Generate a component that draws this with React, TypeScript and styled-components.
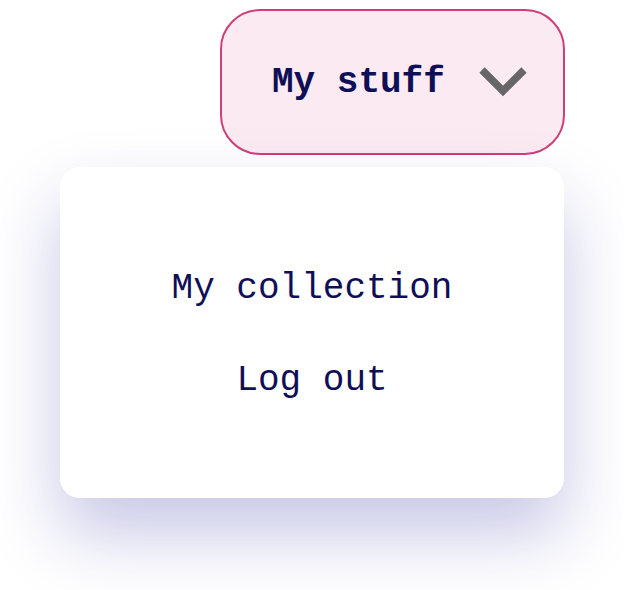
import styled, { createGlobalStyle } from "styled-components";

const MONO = `"Liberation Mono", "Courier New", monospace`;

const GlobalStyle = createGlobalStyle`
  html, body {
    margin: 0;
    padding: 0;
    background: #ffffff;
  }
  body {
    font-family: ${MONO};
  }
`;

const Chevron = () => (
  <svg width="48" height="32" viewBox="0 0 48 32" fill="none">
    <path d="M3 4 L24 25 L45 4" stroke="#666666" strokeWidth="7.5" strokeLinecap="butt" strokeLinejoin="miter" />
  </svg>
);

const App = () => {
  return (
    <>
      <GlobalStyle />
      <StyledWrapper>
        <StyledTrigger type="button">
          <StyledTriggerLabel>My stuff</StyledTriggerLabel>
          <Chevron />
        </StyledTrigger>
        <StyledMenu>
          <StyledMenuItem href="#">My collection</StyledMenuItem>
          <StyledMenuItem href="#">Log out</StyledMenuItem>
        </StyledMenu>
      </StyledWrapper>
    </>
  );
};

export default App;

const StyledWrapper = styled.div`
  width: 565px;
  min-height: 590px;
  box-sizing: border-box;
  padding: 9px 0 0 60px;

  display: flex;
  flex-direction: column;
  align-items: flex-end;
  gap: 12px;
`;

const StyledTrigger = styled.button`
  box-sizing: border-box;
  width: 345px;
  height: 146px;
  padding: 0 36px 0 50px;
  border: 2px solid #cc3f78;
  border-radius: 40px;
  background-color: #fbeaf1;
  cursor: pointer;

  display: flex;
  align-items: center;
  justify-content: space-between;
`;

const StyledTriggerLabel = styled.span`
  font-family: ${MONO};
  font-weight: 700;
  font-size: 36px;
  color: #0f0f57;
`;

const StyledMenu = styled.nav`
  box-sizing: border-box;
  width: 504px;
  height: 331px;
  margin-right: 1px;
  padding-top: 100px;
  border-radius: 20px;
  background-color: #ffffff;
  box-shadow: 0 36px 70px rgba(40, 40, 160, 0.26);

  display: flex;
  flex-direction: column;
  align-items: center;
  gap: 48px;
`;

const StyledMenuItem = styled.a`
  font-family: ${MONO};
  font-size: 36px;
  line-height: 44px;
  color: #0f0f57;
  text-decoration: none;
`;
